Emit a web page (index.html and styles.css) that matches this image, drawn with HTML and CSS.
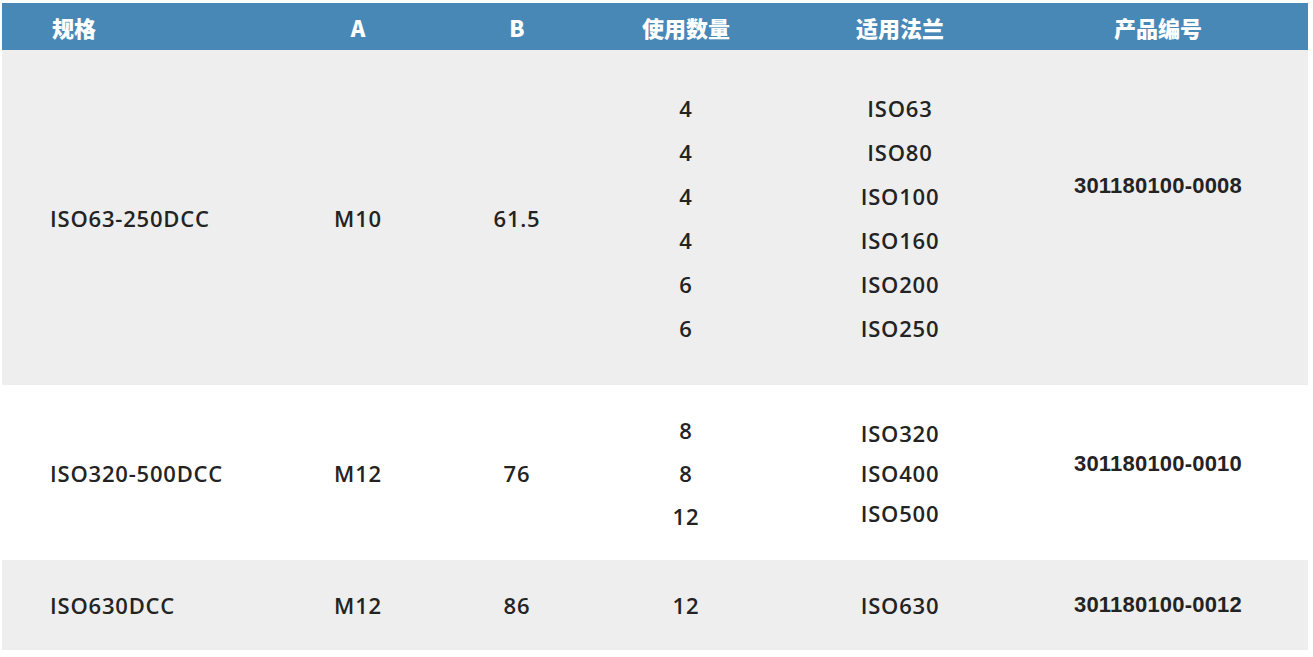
FILE: index.html
```html
<!DOCTYPE html>
<html lang="zh">
<head>
<meta charset="utf-8">
<title>规格表</title>
<link rel="stylesheet" href="styles.css">
</head>
<body>
<div class="table">
  <div class="row head">
    <div class="cell first">规格</div>
    <div class="cell">A</div>
    <div class="cell">B</div>
    <div class="cell">使用数量</div>
    <div class="cell">适用法兰</div>
    <div class="cell code">产品编号</div>
  </div>
  <div class="row r1 gray">
    <div class="cell first">ISO63-250DCC</div>
    <div class="cell">M10</div>
    <div class="cell">61.5</div>
    <div class="cell"><div class="list l1"><span>4</span><span>4</span><span>4</span><span>4</span><span>6</span><span>6</span></div></div>
    <div class="cell"><div class="list l1"><span>ISO63</span><span>ISO80</span><span>ISO100</span><span>ISO160</span><span>ISO200</span><span>ISO250</span></div></div>
    <div class="cell code num up1">301180100-0008</div>
  </div>
  <div class="row r2">
    <div class="cell first">ISO320-500DCC</div>
    <div class="cell">M12</div>
    <div class="cell">76</div>
    <div class="cell"><div class="list l2"><span>8</span><span>8</span><span>12</span></div></div>
    <div class="cell"><div class="list l3"><span>ISO320</span><span>ISO400</span><span>ISO500</span></div></div>
    <div class="cell code num up2">301180100-0010</div>
  </div>
  <div class="row r3 gray">
    <div class="cell first">ISO630DCC</div>
    <div class="cell">M12</div>
    <div class="cell">86</div>
    <div class="cell">12</div>
    <div class="cell">ISO630</div>
    <div class="cell code num">301180100-0012</div>
  </div>
</div>
</body>
</html>
```

FILE: styles.css
```css
html, body {
  margin: 0;
  padding: 0;
  background: #ffffff;
}

.table {
  padding: 3px 5px 0 2px;
  font-family: "Open Sans", "Liberation Sans", "Noto Sans CJK SC", sans-serif;
  color: #232323;
}

.row {
  display: grid;
  grid-template-columns: 288px 136px 182px 156px 272px 1fr;
  align-items: center;
}

.cell {
  display: flex;
  flex-direction: column;
  align-items: center;
  justify-content: center;
  font-size: 22px;
  font-weight: 600;
  letter-spacing: 0.8px;
  line-height: 26px;
}

.cell.first {
  align-items: flex-start;
  padding-left: 48px;
}

.cell.code {
  padding-right: 28px;
}

.head {
  height: 47px;
  background: #4888b6;
  color: #ffffff;
}

.head .cell {
  font-family: "Noto Sans CJK SC", "Liberation Sans", sans-serif;
  font-weight: 900;
  font-size: 22px;
  letter-spacing: 0;
}

.head .cell.first {
  padding-left: 50px;
}

.gray {
  background: #eeeeee;
}

.r1 { height: 335px; }
.r2 { height: 175px; background: #ffffff; }
.r3 { height: 90px; }

.list {
  display: flex;
  flex-direction: column;
  align-items: center;
}

.list.l1 { gap: 18px; }
.list.l2 { gap: 17px; }
.list.l3 { gap: 14px; }

.list span {
  line-height: 26px;
}

.num {
  font-family: "Liberation Sans", "Open Sans", sans-serif;
  font-weight: 700;
  font-size: 22px;
  letter-spacing: 0.2px;
}

.up1 { margin-bottom: 64px; }
.up2 { margin-bottom: 18px; }
```
